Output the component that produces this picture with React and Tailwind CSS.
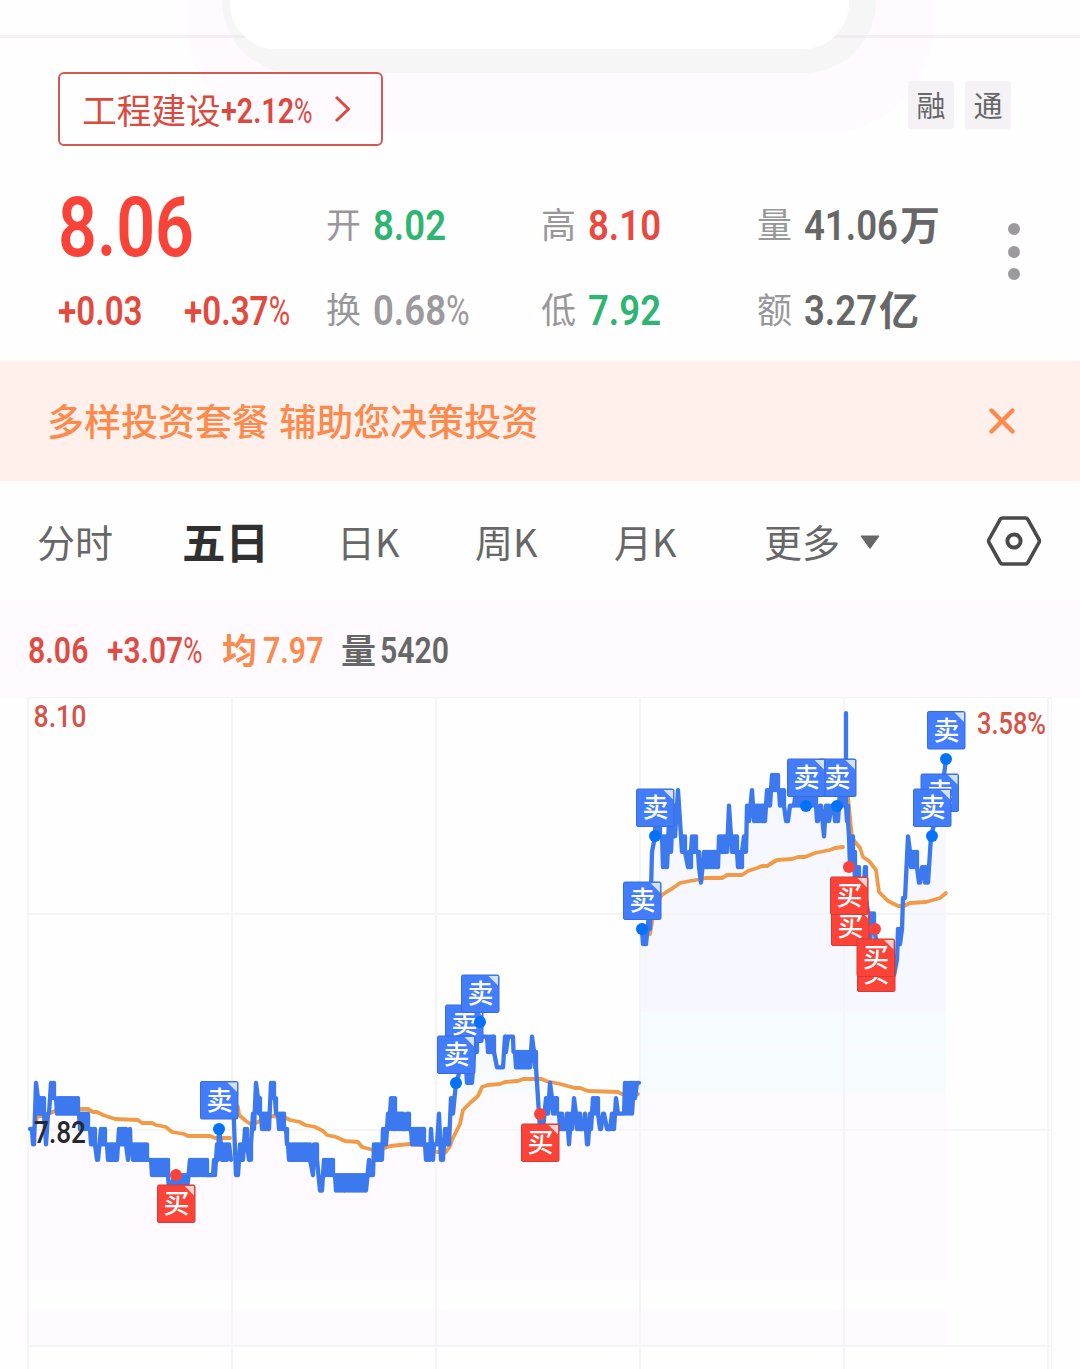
import React from "react";
import clsx from "clsx";

const CJK = "font-['Noto_Sans_CJK_SC',sans-serif]";

// Condensed figures: the inner span is squeezed, the outer one keeps the real width.
function Num({ children, box, squeeze = "scale-x-[0.84]", className }) {
  const text = String(children);
  const pct = text.endsWith("%");
  return (
    <span className={clsx("inline-block whitespace-nowrap font-['Roboto',sans-serif] font-semibold leading-none", box, className)}>
      <span className={clsx("inline-block origin-left", squeeze)}>
        {pct ? text.slice(0, -1) : text}
        {pct && <span className="inline-block w-[0.55em] origin-left scale-x-[0.88] font-normal">%</span>}
      </span>
    </span>
  );
}

function Quote({ label, value, unit, color, box, squeeze }) {
  return (
    <div className="flex h-[48px] items-center">
      <span className="mb-[3px] w-[47px] text-[35px] leading-none text-[#999799]">{label}</span>
      <Num box={box} squeeze={squeeze} className={clsx("mt-[3px] text-[42px]", color)}>{value}</Num>
      {unit && <span className="mb-[2px] text-[40px] font-bold leading-none text-[#666766]">{unit}</span>}
    </div>
  );
}

function Header() {
  return (
    <header className="relative h-[361px] overflow-hidden">
      <div className="absolute left-[187px] -top-[100px] h-[233px] w-[747px] rounded-b-[110px] bg-[#fefaff]" />
      <div className="absolute left-[222px] -top-[100px] h-[173px] w-[654px] rounded-b-[72px] bg-[#f6f6f6]" />
      <div className="absolute left-0 top-[35px] h-[3px] w-full bg-[#ece6ec]/60" />
      <div className="absolute left-[230px] -top-[100px] h-[149px] w-[619px] rounded-b-[46px] bg-white" />

      <div className="relative flex items-start justify-between pl-[58px] pr-[69px] pt-[72px]">
        <button className="flex h-[74px] w-[325px] items-center rounded-[6px] border-2 border-[#d25a50] pl-[22px] text-[#db4a3f]">
          <span className="text-[34.7px] leading-none">工程建设</span>
          <Num box="w-[94px]" squeeze="scale-x-[0.82]" className="mt-[4px] text-[35px]">+2.12%</Num>
          <svg className="ml-[19px]" width="18" height="28" viewBox="0 0 18 28" fill="none" stroke="currentColor" strokeWidth="3">
            <path d="M2 2 14.5 14 2 26" />
          </svg>
        </button>
        <div className="mt-[9px] flex gap-[11px] text-[29px] text-[#666]">
          <span className="flex h-[48px] w-[46px] items-center justify-center rounded-[3px] bg-[#f5f2f6]">融</span>
          <span className="flex h-[48px] w-[46px] items-center justify-center rounded-[3px] bg-[#f5f2f6]">通</span>
        </div>
      </div>

      <div className="relative mt-[54px] flex pl-[58px]">
        <div className="w-[268px] text-[#e34a3e]">
          <div className="-mt-px flex h-[57px] items-center">
            <Num box="w-[140px]" squeeze="scale-x-[0.82]" className="text-[83px] text-[#fa4338]">8.06</Num>
          </div>
          <div className="mt-[32px] flex h-[48px] items-center">
            <Num box="w-[126px]" squeeze="scale-x-[0.83]" className="text-[40px]">+0.03</Num>
            <Num box="w-[110px]" squeeze="scale-x-[0.83]" className="text-[40px]">+0.37%</Num>
          </div>
        </div>
        <div className="grid grid-cols-[215px_216px_251px] content-start gap-y-[37px]">
          <Quote label="开" value="8.02" color="text-[#2fb573]" box="w-[76px]" squeeze="scale-x-[0.87]" />
          <Quote label="高" value="8.10" color="text-[#e84a3f]" box="w-[76px]" squeeze="scale-x-[0.87]" />
          <Quote label="量" value="41.06" unit="万" color="text-[#666766]" box="w-[96px]" squeeze="scale-x-[0.87]" />
          <Quote label="换" value="0.68%" color="text-[#9c9a9c]" box="w-[95px]" squeeze="scale-x-[0.87]" />
          <Quote label="低" value="7.92" color="text-[#2fb573]" box="w-[76px]" squeeze="scale-x-[0.87]" />
          <Quote label="额" value="3.27" unit="亿" color="text-[#666766]" box="w-[75px]" squeeze="scale-x-[0.87]" />
        </div>
        <div className="mt-[23px] flex flex-col gap-[10.5px]">
          <i className="size-[12px] rounded-full bg-[#9c9a9d]" />
          <i className="size-[12px] rounded-full bg-[#9c9a9d]" />
          <i className="size-[12px] rounded-full bg-[#9c9a9d]" />
        </div>
      </div>
    </header>
  );
}

function Banner() {
  return (
    <div className="flex h-[120px] items-center justify-between bg-[#fff0ec] pl-[47px] pr-[63px] text-[#fb8a4c]">
      <span className="whitespace-nowrap text-[37px] font-medium [word-spacing:2px]">多样投资套餐 辅助您决策投资</span>
      <svg width="30" height="30" viewBox="0 0 30 30" stroke="currentColor" strokeWidth="4.4" strokeLinecap="round">
        <path d="M4.500 4.500 25.500 25.500M25.500 4.500 4.500 25.500" />
      </svg>
    </div>
  );
}

function Tabs() {
  return (
    <nav className="flex h-[119px] items-center pl-[37px] text-[38px] text-[#666766]">
      <span className="w-[145px]">分时</span>
      <span className="w-[155px] text-[43.5px] font-bold text-[#303030]">五日</span>
      <span className="w-[138px]">日K</span>
      <span className="w-[139px]">周K</span>
      <span className="w-[150px]">月K</span>
      <span className="w-[96px]">更多</span>
      <svg className="mt-[3px]" width="20" height="15" viewBox="0 0 20 15" fill="currentColor" stroke="currentColor" strokeLinejoin="round">
        <path d="M1 1H19L10 13.500Z" />
      </svg>
      <svg className="ml-[105px]" width="58" height="52" viewBox="0 0 58 52" fill="none" stroke="#4a4a4a" strokeWidth="3.6" strokeLinejoin="round">
        <path d="M17.500 3H40.500Q42 3 42.800 4.400L54 24.500Q54.800 26 54 27.500L42.800 47.600Q42 49 40.500 49H17.500Q16 49 15.200 47.600L4 27.500Q3.200 26 4 24.500L15.200 4.400Q16 3 17.500 3Z" />
        <circle cx="29" cy="26" r="6.6" strokeWidth="4" />
      </svg>
    </nav>
  );
}

function InfoBar() {
  return (
    <div className="flex h-[97px] items-center bg-[#fefaff] pl-[28px] pt-[4px] text-[36px] text-[#dd4d43]">
      <Num box="w-[79px]">8.06</Num>
      <Num box="w-[115px]" squeeze="scale-x-[0.83]">+3.07%</Num>
      <span className="mb-[4px] w-[41px] text-[35px] font-bold leading-none text-[#fb8a4c]">均</span>
      <Num box="w-[78px]" className="text-[#fb8a4c]">7.97</Num>
      <span className="mb-[4px] w-[39px] text-[35px] font-bold leading-none text-[#666766]">量</span>
      <Num box="w-[80px]" className="text-[#666766]">5420</Num>
    </div>
  );
}

// Price runs per day: [xStart, xEnd, high, low] in cents from 7.82.
const days = [
  [[30, 30, 0, 0], [32, 34, 0, -1], [36, 36, 3, 3], [38, 44, 2, 1], [46, 46, -1, -1], [48, 49, 1, 1], [51, 54, 3, 2], [56, 78, 2, 1], [79, 88, 1, 0], [90, 95, 0, -1], [97, 98, -2, -2], [101, 105, 0, -1], [107, 117, -1, -2], [119, 126, 0, -1], [128, 128, -2, -2], [130, 130, 0, -1], [132, 147, -1, -2], [151, 168, -2, -3], [169, 169, -4, -4], [175, 187, -3, -4], [190, 199, -2, -3], [201, 207, -2, -3], [213, 213, -3, -3], [214, 215, -2, -3], [217, 218, -1, -2], [219, 219, 0, 0], [221, 227, -1, -2], [229, 229, -1, -1], [231, 231, -2, -2]],
  [[233, 233, 2, 2], [236, 236, -3, -3], [238, 238, -3, -3], [240, 243, -1, -2], [245, 247, 0, -1], [249, 251, -2, -1], [253, 254, 1, 0], [256, 256, 3, 3], [258, 260, 2, 1], [261, 269, 1, 0], [271, 274, 3, 2], [275, 276, 2, 1], [278, 284, 1, 0], [286, 287, 0, -1], [288, 292, -1, -2], [294, 302, -1, -2], [304, 310, -1, -2], [313, 313, -3, -3], [314, 317, -1, -2], [320, 322, -4, -4], [324, 326, -2, -3], [328, 333, -2, -3], [335, 345, -3, -4], [347, 366, -3, -4], [369, 369, -2, -2], [370, 373, -3, -3], [374, 382, -1, -2], [383, 386, 0, -1], [388, 389, 1, 0], [391, 395, 2, 0], [397, 403, 1, 0], [406, 406, 0, 0], [407, 409, 1, 0], [411, 424, 0, -1], [425, 430, -1, -2], [431, 431, 0, 0], [432, 433, -1, -2], [434, 435, -1, -1]],
  [[437, 437, -1, -1], [439, 439, 1, 1], [441, 443, -2, -2], [445, 449, 0, -1], [451, 453, 2, 1], [456, 456, 3, 3], [461, 463, 4, 5], [466, 472, 4, 3], [474, 477, 5, 6], [480, 486, 6, 6], [487, 494, 6, 5], [497, 503, 4, 4], [505, 506, 6, 5], [508, 511, 6, 6], [513, 513, 6, 5], [515, 530, 5, 4], [532, 532, 6, 6], [534, 536, 5, 4], [540, 543, 0, 0], [546, 548, 2, 1], [550, 550, 3, 3], [552, 557, 2, 1], [559, 562, 1, 0], [565, 565, 0, 0], [567, 568, 1, 0], [569, 569, -1, -1], [571, 572, 1, 0], [574, 574, 2, 2], [576, 580, 1, 0], [583, 583, 0, 0], [585, 585, 1, 1], [587, 588, -1, -1], [590, 591, 1, 0], [593, 598, 2, 1], [600, 601, 0, 0], [603, 604, 1, 1], [607, 610, 0, 0], [612, 614, 1, 0], [616, 616, 2, 2], [618, 624, 1, 1], [625, 632, 3, 1], [634, 635, 3, 2], [637, 639, 3, 3]],
  [[642, 646, 13, 12], [649, 650, 14, 13], [652, 652, 18, 18], [655, 655, 19, 20], [658, 660, 20, 19], [662, 667, 19, 17], [669, 671, 20, 18], [673, 675, 21, 19], [678, 678, 22, 22], [680, 680, 20, 20], [681, 685, 19, 18], [688, 691, 17, 18], [692, 696, 19, 18], [698, 699, 18, 17], [701, 701, 16, 16], [704, 708, 18, 17], [710, 713, 18, 17], [715, 718, 18, 17], [719, 727, 19, 18], [729, 729, 21, 21], [731, 737, 19, 18], [738, 742, 17, 18], [744, 746, 19, 18], [747, 749, 21, 20], [752, 752, 22, 22], [753, 765, 21, 20], [767, 770, 22, 21], [772, 778, 23, 22], [779, 784, 22, 21], [786, 788, 20, 20], [790, 794, 21, 21], [796, 802, 22, 21], [804, 812, 22, 21], [814, 816, 22, 21], [817, 818, 20, 20], [820, 821, 21, 21], [824, 824, 19, 19], [826, 829, 21, 20], [832, 833, 21, 21], [834, 838, 21, 20], [840, 843, 22, 21]],
  [[846, 846, 27, 27], [846, 848, 21, 20], [849, 853, 19, 17], [854, 855, 18, 16], [857, 859, 17, 16], [861, 863, 15, 15], [865, 866, 17, 15], [868, 870, 14, 12], [872, 874, 14, 13], [877, 880, 12, 11], [890, 894, 11, 10], [897, 897, 11, 11], [898, 900, 13, 12], [902, 902, 13, 13], [903, 905, 15, 15], [908, 908, 19, 19], [910, 917, 18, 17], [919, 920, 16, 16], [922, 923, 17, 17], [924, 928, 17, 16], [931, 931, 19, 19], [935, 936, 20, 21], [940, 942, 22, 22], [946, 946, 24, 24]],
];

const averages = [
  "33,1134 37,1117 45,1115 60,1109 88,1109 93,1112 97,1112 103,1115 115,1119 138,1120 142,1123 152,1123 156,1125 166,1127 172,1132 184,1134 188,1136 210,1136 215,1138 230,1138",
  "238,1107 239,1115 246,1121 252,1125 260,1121 272,1116 284,1117 290,1120 300,1122 305,1125 315,1127 323,1131 327,1135 336,1137 345,1141 358,1142 362,1147 373,1150 385,1148 390,1146 410,1144 434,1146",
  "437,1152 446,1152 450,1146 452,1140 460,1124 463,1110 470,1103 478,1096 482,1087 488,1085 500,1084 505,1082 518,1081 523,1079 542,1079 546,1081 560,1084 575,1088 580,1088 588,1091 618,1092 622,1094 638,1094",
  "642,925 650,934 655,905 662,895 668,891 673,888 680,883 690,881 702,879 705,878 722,878 727,875 742,875 748,871 757,868 762,866 767,866 777,860 792,859 798,857 805,857 815,853 830,850 835,848 843,847",
  "848,797 852,838 860,848 863,857 869,861 876,870 879,892 888,901 898,906 904,906 910,903 926,902 940,898 946,893",
];

const yOf = (k) => 1129 - k * 15.4;

function toPoints(runs) {
  const pts = [];
  for (const [x0, x1, a, b] of runs) {
    if (x0 === x1) {
      pts.push([x0, yOf(a)]);
      if (a !== b) pts.push([x0 + 0.5, yOf(b)]);
      continue;
    }
    for (let x = x0, up = true; x <= x1; x += 1, up = !up) pts.push([x, yOf(up ? a : b)]);
    // close the block with a full-height edge
    if (a !== b) pts.push([x1, yOf(a)], [x1, yOf(b)]);
  }
  return pts;
}

const markers = [
  [219, 1100, "卖"], [464, 1023.5, "卖"], [480, 993.5, "卖"], [456, 1054.5, "卖"],
  [642, 900.5, "卖"], [655, 807.5, "卖"], [837, 777.5, "卖"], [806, 777.5, "卖"],
  [939.5, 792.5, "卖"], [932, 807.5, "卖"], [946, 730, "卖"],
  [176, 1203.5, "买"], [540, 1142.5, "买"], [850, 926.5, "买"], [849, 895.5, "买"],
  [876, 972.5, "买"], [875.5, 957.5, "买"],
];

const sellDots = [[219, 1129], [456, 1083], [480, 1022], [642, 929], [655, 836], [806, 806], [837, 806], [946, 759], [932, 836]];
const buyDots = [[176, 1175], [540, 1114], [849, 867], [875, 929]];

function Marker({ x, y, side }) {
  const sell = side === "卖";
  return (
    <g transform={`translate(${x - 19} ${y - 19})`}>
      <rect x="0.5" y="0.5" width="37.5" height="37.5" rx="1.5" fill={sell ? "#427dfd" : "#fd4237"} stroke={sell ? "#3a6cd6" : "#cf3d36"} />
      <path d="M27.500 1.500H37V11Z" fill={sell ? "#d3e1ff" : "#ffd2d0"} />
      <text x="19.5" y="28.5" textAnchor="middle" fontSize="26" fontWeight="500" fill="#fff">{side}</text>
    </g>
  );
}

function Chart() {
  const lines = days.map(toPoints);
  const area = lines
    .map((p) => `M${p[0][0] - 2} 1346L${p[0][0] - 2} ${p[0][1]}L${p.map((q) => q.join(" ")).join("L")}L${p[p.length - 1][0]} 1346Z`)
    .join("");
  return (
    <svg className="block" width="1080" height="672" viewBox="0 697 1080 672">
      <defs>
        <clipPath id="area"><path d={area} /></clipPath>
      </defs>
      <g clipPath="url(#area)">
        <rect x="28" y="696" width="918" height="316" fill="#f6f7ff" />
        <rect x="28" y="1012" width="918" height="82" fill="#f5fbff" />
        <rect x="28" y="1047" width="918" height="2" fill="#fafaff" />
        <rect x="28" y="1094" width="918" height="186" fill="#fefaff" />
        <rect x="28" y="1310" width="918" height="36" fill="#fefaff" />
      </g>
      <g stroke="#f5f5f7" strokeWidth="2">
        <path d="M28 697.500H1052" strokeWidth="1.5" />
        <path d="M28 914H1052M28 1130H1052M28 1346H1052" />
        <path d="M28 697V1369M232 697V1369M436 697V1369M640 697V1369M844 697V1369M1048 697V1369" />
        <path d="M1051.500 697V1369" strokeWidth="1" />
      </g>
      <g fill="none" strokeLinejoin="round" strokeLinecap="round">
        {averages.map((a, i) => <polyline key={i} points={a} stroke="#f19b48" strokeWidth="3.8" />)}
        {lines.map((p, i) => <polyline key={i} points={p.map((q) => q.join(",")).join(" ")} stroke="#3c78ee" strokeWidth="4.3" />)}
      </g>
      <g className="font-['Roboto',sans-serif] font-medium">
        <text x="33.5" y="727" fontSize="31" textLength="53" lengthAdjust="spacingAndGlyphs" fill="#d4544a">8.10</text>
        <text x="34" y="1143" fontSize="31" textLength="52" lengthAdjust="spacingAndGlyphs" fill="#26282c">7.82</text>
        <text x="977" y="734" fontSize="31" textLength="69" lengthAdjust="spacingAndGlyphs" fill="#d4544a">3.58%</text>
      </g>
      {markers.map(([x, y, side], i) => <Marker key={i} x={x} y={y} side={side} />)}
      {sellDots.map(([x, y]) => <circle key={x} cx={x} cy={y} r="6" fill="#0472f7" />)}
      {buyDots.map(([x, y]) => <circle key={x} cx={x} cy={y} r="6" fill="#fb423a" />)}
    </svg>
  );
}

export default function App() {
  return (
    <main className={clsx("h-[1369px] w-[1080px] overflow-hidden bg-[#fefefe]", CJK)}>
      <Header />
      <Banner />
      <Tabs />
      <InfoBar />
      <Chart />
    </main>
  );
}
